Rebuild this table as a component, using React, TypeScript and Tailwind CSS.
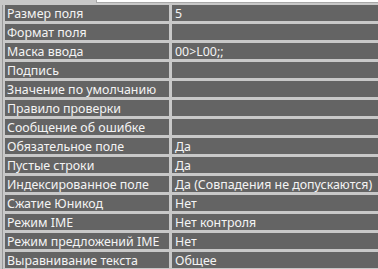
const rows: [string, string][] = [
  ['Размер поля', '5'],
  ['Формат поля', ''],
  ['Маска ввода', '00>L00;;'],
  ['Подпись', ''],
  ['Значение по умолчанию', ''],
  ['Правило проверки', ''],
  ['Сообщение об ошибке', ''],
  ['Обязательное поле', 'Да'],
  ['Пустые строки', 'Да'],
  ['Индексированное поле', 'Да (Совпадения не допускаются)'],
  ['Сжатие Юникод', 'Нет'],
  ['Режим IME', 'Нет контроля'],
  ['Режим предложений IME', 'Нет'],
  ['Выравнивание текста', 'Общее'],
]

const App = () => {
  return (
    <div className="w-[378px] h-[269px] overflow-hidden bg-[#c8c8c8] font-['Noto_Sans',sans-serif] text-[12.4px] text-[#f4f4f4]">
      <div className="h-[5px]">
        <div className="ml-[96px] h-[3px] bg-white border-l border-b border-[#a8a8a8]"></div>
      </div>
      <div className="flex h-[264px]">
        {/* left frame edge */}
        <div className="w-[5px] flex">
          <div className="w-[2px]"></div>
          <div className="w-px bg-[#9a9a9a]"></div>
        </div>
        <div className="flex-1 grid grid-cols-[164px_1fr] gap-[3px] auto-rows-[16px]">
          {rows.map(([label, value]) => [
            <div key={label} className="bg-[#646464] pl-[2px] pt-px leading-[16px] whitespace-nowrap overflow-hidden">
              {label}
            </div>,
            <div key={label + '-v'} className="bg-[#646464] pl-[3px] pt-px leading-[16px] whitespace-nowrap overflow-hidden">
              {value}
            </div>,
          ])}
        </div>
      </div>
    </div>
  )
}

export default App
